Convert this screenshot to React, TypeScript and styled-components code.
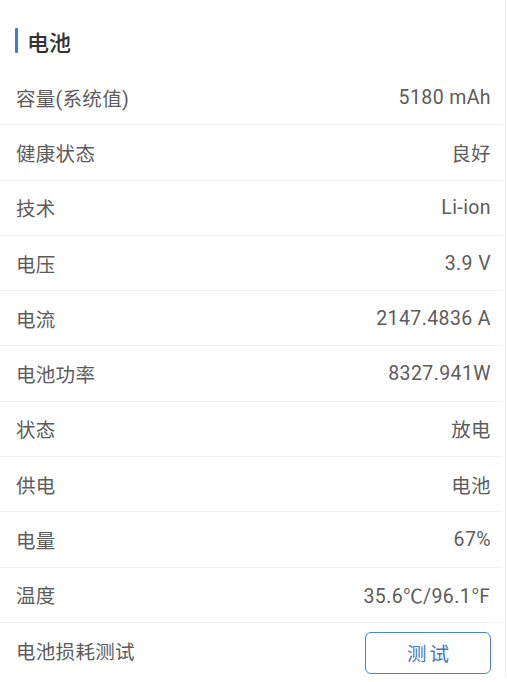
import React from 'react'
import styled, { createGlobalStyle } from 'styled-components'

const GlobalStyle = createGlobalStyle`
  html, body {
    margin: 0;
    padding: 0;
    background: #ffffff;
  }
  body {
    font-family: Roboto, 'Noto Sans CJK SC', sans-serif;
  }
`

const Page = styled.div`
  width: 505px;
  border-right: 1px solid #f0f1f3;
  background: #fff;
`

const Header = styled.div`
  height: 70px;
  display: flex;
  align-items: center;
  padding: 11px 0 0 15px;
  box-sizing: border-box;
`

const Bar = styled.span`
  width: 3px;
  height: 25px;
  background: #3d7bd8;
  border-radius: 1px;
  margin-right: 9px;
`

const Title = styled.h2`
  margin: 0;
  font-size: 22px;
  font-weight: 500;
  color: #333;
`

const Row = styled.div<{ $last?: boolean }>`
  height: 55.3px;
  display: flex;
  align-items: center;
  justify-content: space-between;
  padding: 0 12px 0 16px;
  box-sizing: border-box;
  border-bottom: ${(p) => (p.$last ? 'none' : '1px solid #f1f1f3')};
  margin-right: 2px;
`

const Label = styled.span`
  font-size: 19.5px;
  letter-spacing: 0.3px;
  color: #5c5c5c;
`

const Value = styled.span`
  font-size: 19.5px;
  letter-spacing: 0.4px;
  color: #5c5c5c;
`

const TestButton = styled.button`
  width: 126px;
  height: 42px;
  border: 1px solid #4f82c8;
  border-radius: 6px;
  background: #fff;
  color: #3f78c6;
  font-size: 19.5px;
  font-family: Roboto, 'Noto Sans CJK SC', sans-serif;
  letter-spacing: 3px;
  padding: 0 0 0 3px;
  margin-top: 4px;
`

const rows = [
  { label: '容量(系统值)', value: '5180 mAh' },
  { label: '健康状态', value: '良好' },
  { label: '技术', value: 'Li-ion' },
  { label: '电压', value: '3.9 V' },
  { label: '电流', value: '2147.4836 A' },
  { label: '电池功率', value: '8327.941W' },
  { label: '状态', value: '放电' },
  { label: '供电', value: '电池' },
  { label: '电量', value: '67%' },
  { label: '温度', value: '35.6℃/96.1℉' }
]

export default function App() {
  return (
    <>
      <GlobalStyle />
      <Page>
        <Header>
          <Bar />
          <Title>电池</Title>
        </Header>
        {rows.map((r) => (
          <Row key={r.label}>
            <Label>{r.label}</Label>
            <Value>{r.value}</Value>
          </Row>
        ))}
        <Row $last>
          <Label>电池损耗测试</Label>
          <TestButton>测试</TestButton>
        </Row>
      </Page>
    </>
  )
}
